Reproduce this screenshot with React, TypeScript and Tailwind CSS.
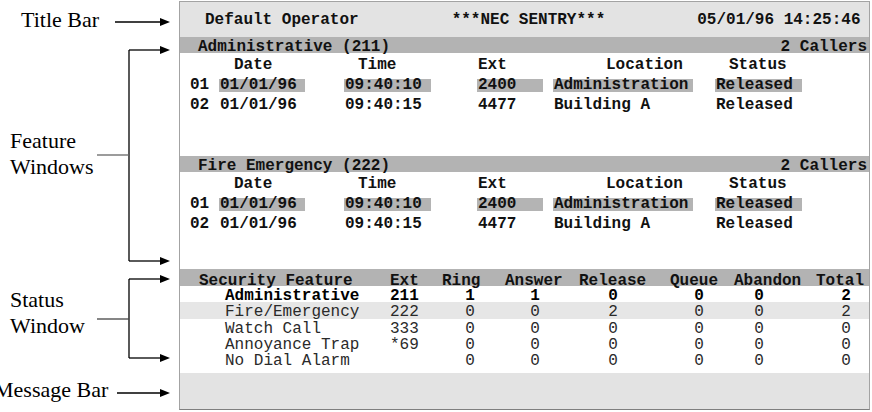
const calls = [
  { n: "01", date: "01/01/96", time: "09:40:10", ext: "2400", loc: "Administration", status: "Released", hl: true },
  { n: "02", date: "01/01/96", time: "09:40:15", ext: "4477", loc: "Building A", status: "Released", hl: false },
];

const stats = [
  { name: "Administrative", ext: "211", v: ["1", "1", "0", "0", "0", "2"], bold: true, hl: false },
  { name: "Fire/Emergency", ext: "222", v: ["0", "0", "2", "0", "0", "2"], bold: false, hl: true },
  { name: "Watch Call", ext: "333", v: ["0", "0", "0", "0", "0", "0"], bold: false, hl: false },
  { name: "Annoyance Trap", ext: "*69", v: ["0", "0", "0", "0", "0", "0"], bold: false, hl: false },
  { name: "No Dial Alarm", ext: "", v: ["0", "0", "0", "0", "0", "0"], bold: false, hl: false },
];

// left offsets of the value cells in the status window
const valOffsets = ["ml-[10px]", "ml-[25px]", "ml-[38px]", "ml-[46px]", "ml-[20px]", "ml-[47px]"];

function Cell({ hl, w, children }: { hl?: boolean; w: string; children: React.ReactNode }) {
  return (
    <span className={`mt-[5px] block h-[13px] pl-[1px] leading-[13px] whitespace-pre ${w} ${hl ? "bg-[#b4b4b4]" : ""}`}>
      {children}
    </span>
  );
}

function FeatureWindow({ title, className }: { title: string; className: string }) {
  return (
    <div className={className}>
      <div className="flex h-[16px] justify-between bg-[#b3b3b3] pl-[18px] pr-[2px] leading-[21px]">
        <span className="whitespace-pre">{title}</span>
        <span>2 Callers</span>
      </div>
      <div className="mt-[1px]">
        <div className="flex h-[20px]">
          <div className="w-[39px]" />
          <div className="w-[125px] pl-[14px]"><Cell w="w-auto">Date</Cell></div>
          <div className="w-[133px] pl-[13px]"><Cell w="w-auto">Time</Cell></div>
          <div className="w-[76px]"><Cell w="w-auto">Ext</Cell></div>
          <div className="w-[162px] pl-[52px]"><Cell w="w-auto">Location</Cell></div>
          <div className="pl-[13px]"><Cell w="w-auto">Status</Cell></div>
        </div>
        {calls.map((c) => (
          <div key={c.n} className="flex h-[20px]">
            <div className="w-[39px] pl-[9px]"><Cell w="w-auto">{c.n}</Cell></div>
            <div className="w-[125px]"><Cell hl={c.hl} w="w-[86px]">{c.date}</Cell></div>
            <div className="w-[133px]"><Cell hl={c.hl} w="w-[87px]">{c.time}</Cell></div>
            <div className="w-[76px]"><Cell hl={c.hl} w="w-[66px]">{c.ext}</Cell></div>
            <div className="w-[162px]"><Cell hl={c.hl} w="w-[140px]">{c.loc}</Cell></div>
            <div><Cell hl={c.hl} w="w-[87px]">{c.status}</Cell></div>
          </div>
        ))}
      </div>
    </div>
  );
}

function StatusWindow() {
  return (
    <div>
      <div className="flex h-[17px] bg-[#b3b3b3] leading-[24px] whitespace-pre">
        <span className="w-[210px] pl-[19px]">Security Feature</span>
        <span className="w-[52px]">Ext</span>
        <span className="w-[63px]">Ring</span>
        <span className="w-[74px]">Answer</span>
        <span className="w-[91px]">Release</span>
        <span className="w-[64px]">Queue</span>
        <span className="w-[82px]">Abandon</span>
        <span>Total</span>
      </div>
      {stats.map((s) => (
        <div
          key={s.name}
          className={`flex h-[16.25px] pt-[2px] leading-[16px] whitespace-pre ${s.bold ? "font-bold text-black" : "font-normal text-[#2a2a2a]"} ${s.hl ? "bg-[#e6e6e6]" : ""}`}
        >
          <span className="w-[210px] pl-[45px]">{s.name}</span>
          <span className="w-[50px]">{s.ext}</span>
          {s.v.map((v, i) => (
            <span key={i} className={`w-[40px] text-center ${valOffsets[i]}`}>{v}</span>
          ))}
        </div>
      ))}
    </div>
  );
}

function Arrow({ x1, x2, y }: { x1: number; x2: number; y: number }) {
  return (
    <g>
      <path d={`M${x1} ${y} H${x2 - 9}`} stroke="#000" strokeWidth="1.3" fill="none" />
      <polygon points={`${x2 - 10},${y - 4} ${x2},${y} ${x2 - 10},${y + 4}`} fill="#000" />
    </g>
  );
}

function Annotations() {
  return (
    <div className="relative h-full w-[179px] shrink-0 font-['Liberation_Serif',serif] text-[22px] leading-[26px] text-black">
      <svg className="absolute inset-0" width="179" height="412" viewBox="0 0 179 412">
        <Arrow x1={115} x2={170} y={22} />
        <path d="M129 50 V261" stroke="#000" strokeWidth="1.3" fill="none" />
        <Arrow x1={129} x2={170} y={50} />
        <Arrow x1={129} x2={170} y={261} />
        <path d="M97 155 H129" stroke="#666" strokeWidth="1.3" fill="none" />
        <path d="M129 279 V358" stroke="#000" strokeWidth="1.3" fill="none" />
        <Arrow x1={129} x2={170} y={279} />
        <Arrow x1={129} x2={170} y={358} />
        <path d="M97 319 H129" stroke="#444" strokeWidth="1.3" fill="none" />
        <Arrow x1={117} x2={170} y={393} />
      </svg>
      <div className="relative pt-[6.6px]">
        <div className="pl-[21px]">Title Bar</div>
        <div className="mt-[95px] pl-[10px]">
          Feature
          <br />
          Windows
        </div>
        <div className="mt-[107px] pl-[10px]">
          Status
          <br />
          Window
        </div>
        <div className="-ml-[6px] mt-[38px] whitespace-nowrap">Message Bar</div>
      </div>
    </div>
  );
}

export default function App() {
  return (
    <div className="flex h-[412px] w-[872px] overflow-hidden bg-white">
      <Annotations />
      <div className="mt-[1px] flex h-[409px] w-[691px] flex-col border border-[#a3a3a3] border-b-[#7f7f7f] font-['Liberation_Mono','Courier_New',monospace] text-[16px] font-bold text-[#111]">
        <div className="flex h-[35px] shrink-0 bg-[#e3e3e3] pt-[1px] leading-[35px] whitespace-pre">
          <span className="pl-[25px]">Default Operator</span>
          <span className="ml-[93px]">***NEC SENTRY***</span>
          <span className="ml-[92px]">05/01/96 14:25:46</span>
        </div>
        <FeatureWindow title="Administrative (211)" className="h-[119px] shrink-0" />
        <FeatureWindow title="Fire Emergency (222)" className="h-[113px] shrink-0" />
        <StatusWindow />
        <div className="mt-auto h-[36px] shrink-0 bg-[#e3e3e3]" />
      </div>
    </div>
  );
}
